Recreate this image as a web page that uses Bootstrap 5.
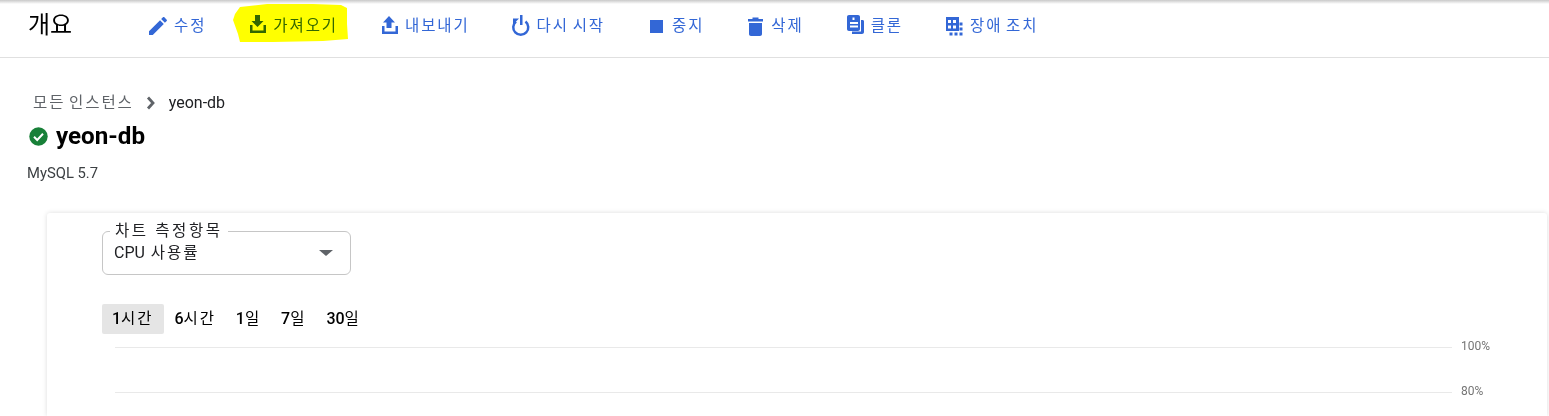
<!DOCTYPE html>
<html lang="ko">
<head>
    <meta charset="UTF-8">
    <title>개요</title>
    <link href="https://cdn.jsdelivr.net/npm/bootstrap@5.3.0/dist/css/bootstrap.min.css" rel="stylesheet">
    <style>
        html, body { height: 416px; overflow: hidden; }
        body {
            font-family: Roboto, "Noto Sans CJK KR", sans-serif;
            font-weight: 400;
            background: #fff;
            color: #202124;
        }
        .ko { letter-spacing: 1.9px; word-spacing: -2px; font-weight: 400; font-size: 15.5px; }
        .top-shade { height: 4px; background: linear-gradient(#c9c9c9, #fff); }
        .action-bar { height: 54px; padding-left: 28px; border-bottom: 1px solid #e0e0e0; }
        .bar-title { width: 122px; font-size: 24px; line-height: 30px; color: #000; margin-top: -11px; }
        .bar-actions { gap: 43px; margin-top: -9px; }
        .bar-item { gap: 4px; color: #3367d6; line-height: 20px; white-space: nowrap; position: relative; }
        .bar-item svg { width: 20px; height: 24px; fill: #3367d6; flex: none; overflow: visible; }
        .bar-item svg.marker { position: absolute; left: -16px; top: -10px; width: 115px; height: 40px; fill: #ffff00; mix-blend-mode: multiply; }
        .page-head { padding: 36px 0 0 27px; }
        .crumbs { padding-left: 6px; font-size: 16px; line-height: 18px; color: #202124; gap: 12px; }
        .crumbs .crumb-root { color: #5f6368; }
        .crumbs .crumb-here { margin-left: 2px; }
        .instance-name { font-size: 24.2px; font-weight: 700; line-height: 30px; color: #000; gap: 8px; margin: 9px 0 0 2px; }
        .engine-text { font-size: 14.8px; line-height: 18px; margin-top: 13px; color: #3c4043; }
        .chart-panel {
            margin: 31px 2px 0 47px;
            height: 203px;
            padding: 18px 0 0 55px;
            border-radius: 3px 3px 0 0;
            background: #fff;
            box-shadow: 0 0 5px rgba(0, 0, 0, .14);
        }
        .metric-select {
            position: relative;
            width: 249px;
            height: 44px;
            padding: 0 17px 0 11px;
            border: 1px solid #c6c6c6;
            border-radius: 6px;
            font-size: 16px;
            color: #202124;
            word-spacing: 2px;
        }
        .metric-label {
            position: absolute;
            left: 7px;
            top: -9px;
            padding: 0 5px;
            background: #fff;
            line-height: 16px;
            color: #202124;
            letter-spacing: 2.6px;
            word-spacing: 0;
        }
        .metric-caret { width: 0; height: 0; border-left: 7px solid transparent; border-right: 7px solid transparent; border-top: 6px solid #5f6368; }
        .range-tabs { margin-top: 29px; font-size: 16px; color: #000; }
        .range-tab { height: 30px; padding: 0 10px; line-height: 30px; font-weight: 500; }
        .range-tab.is-on { padding-right: 11px; background: #e5e5e5; border-radius: 2px; }
        .chart-rows { margin-top: 13px; }
        .chart-row { height: 45px; padding-left: 13px; font-size: 12px; color: #757575; align-items: flex-start; }
        .chart-row:last-child { height: 24px; }
        .chart-line { width: 1337px; height: 1px; background: #e9e9e9; }
        .chart-tick { margin: -8px 0 0 9px; line-height: 14px; }
    </style>
</head>
<body>
    <div class="top-shade"></div>

    <!-- action bar -->
    <div class="action-bar d-flex align-items-center">
        <div class="bar-title">개요</div>
        <div class="bar-actions d-flex align-items-center">
            <div class="bar-item d-flex align-items-center">
                <svg viewBox="4 0 20 24"><path d="M3 17.25V21h3.75L17.81 9.94l-3.75-3.75L3 17.25zM20.71 7.04c.39-.39.39-1.02 0-1.41l-2.34-2.34c-.39-.39-1.02-.39-1.41 0l-1.83 1.83 3.75 3.75 1.83-1.83z"/></svg>
                <span class="ko">수정</span>
            </div>
            <div class="bar-item d-flex align-items-center">
                <svg viewBox="0 0 20 24"><path d="M6 1h5v6h3.500l-6 6-6-6H6zM1 11h2.500v5.500h11V11H17v8H1z"/></svg>
                <span class="ko">가져오기</span>
                <svg class="marker" viewBox="0 0 115 40" preserveAspectRatio="none"><path d="M7 3 34 0 80 0 108 1 114 4 114 20 115 35 90 37 40 38 7 38 5 30 0 16 2 10z"/></svg>
            </div>
            <div class="bar-item d-flex align-items-center">
                <svg viewBox="0 0 20 24"><path d="M8 2l6 6.500h-3.500V14h-5V8.500H2zM1 12h2.500v5.500h11V12H17v8H1z"/></svg>
                <span class="ko">내보내기</span>
            </div>
            <div class="bar-item d-flex align-items-center">
                <svg viewBox="0 0 20 24"><path d="M12.500 7.500A7.500 7.500 0 1 1 3 7.500" fill="none" stroke="#3367d6" stroke-width="2.500"/><path d="M7 1h2.500v10H7zM0 4.500h6l-6 6z"/></svg>
                <span class="ko">다시 시작</span>
            </div>
            <div class="bar-item d-flex align-items-center">
                <svg viewBox="0 0 20 24"><path d="M2 6h13v13H2z"/></svg>
                <span class="ko">중지</span>
            </div>
            <div class="bar-item d-flex align-items-center">
                <svg viewBox="0 0 20 24"><path d="M1 5h4.500V3.500h6V5H16v2.500H1zM2 9h13v11c0 1-.8 2-2 2H4c-1.200 0-2-1-2-2z"/></svg>
                <span class="ko">삭제</span>
            </div>
            <div class="bar-item d-flex align-items-center">
                <svg viewBox="0 0 20 24"><path fill-rule="evenodd" d="M2 1h9c1.200 0 2 .8 2 2v12c0 1.200-.8 2-2 2H2c-1.200 0-2-.8-2-2V3c0-1.200.8-2 2-2zm3.500 2.500v2.500h2V3.500zM3 8v2h8V8zm0 3.500v2h8v-2z"/><path d="M14 6h1.500c1 0 1.500.7 1.500 1.500V18c0 1.300-.8 2-2 2H5v-2.500h9z"/></svg>
                <span class="ko">클론</span>
            </div>
            <div class="bar-item d-flex align-items-center">
                <svg viewBox="0 0 20 24"><path fill-rule="evenodd" d="M0 3h13v14H0zm2 3v3h3V6zm5 0v3h3V6zM2 11.500v3h3v-3zm5 0v3h3v-3zM13.500 8.500h3v3h-3zm0 5h3v3h-3zm0 5h3v3h-3zm-5 0h3v3h-3zm-5 0h3v3h-3z"/></svg>
                <span class="ko">장애 조치</span>
            </div>
        </div>
    </div>

    <!-- instance header -->
    <div class="page-head">
        <div class="crumbs d-flex align-items-center">
            <span class="crumb-root ko">모든 인스턴스</span>
            <svg width="9" height="14" viewBox="0 0 9 14"><path d="M2 1.500 7 7 2 12.500" fill="none" stroke="#5f6368" stroke-width="2.800"/></svg>
            <span class="crumb-here">yeon-db</span>
        </div>
        <div class="instance-name d-flex align-items-center">
            <svg width="19" height="19" viewBox="0 0 19 19"><circle cx="9.500" cy="9.500" r="9.200" fill="#188038"/><path d="M5 9.800 8.200 13 14 6.800" fill="none" stroke="#fff" stroke-width="2"/></svg>
            <span>yeon-db</span>
        </div>
        <div class="engine-text">MySQL 5.7</div>
    </div>

    <!-- chart card -->
    <div class="chart-panel">
        <div class="metric-select d-flex align-items-center justify-content-between">
            <span class="metric-label ko">차트 측정항목</span>
            <span>CPU <span class="ko">사용률</span></span>
            <span class="metric-caret"></span>
        </div>
        <div class="range-tabs d-flex">
            <div class="range-tab is-on">1<span class="ko">시간</span></div>
            <div class="range-tab">6<span class="ko">시간</span></div>
            <div class="range-tab">1<span class="ko">일</span></div>
            <div class="range-tab">7<span class="ko">일</span></div>
            <div class="range-tab">30<span class="ko">일</span></div>
        </div>
        <div class="chart-rows">
            <div class="chart-row d-flex"><div class="chart-line"></div><div class="chart-tick">100%</div></div>
            <div class="chart-row d-flex"><div class="chart-line"></div><div class="chart-tick">80%</div></div>
        </div>
    </div>

    <script src="https://cdn.jsdelivr.net/npm/bootstrap@5.3.0/dist/js/bootstrap.bundle.min.js"></script>
</body>
</html>
